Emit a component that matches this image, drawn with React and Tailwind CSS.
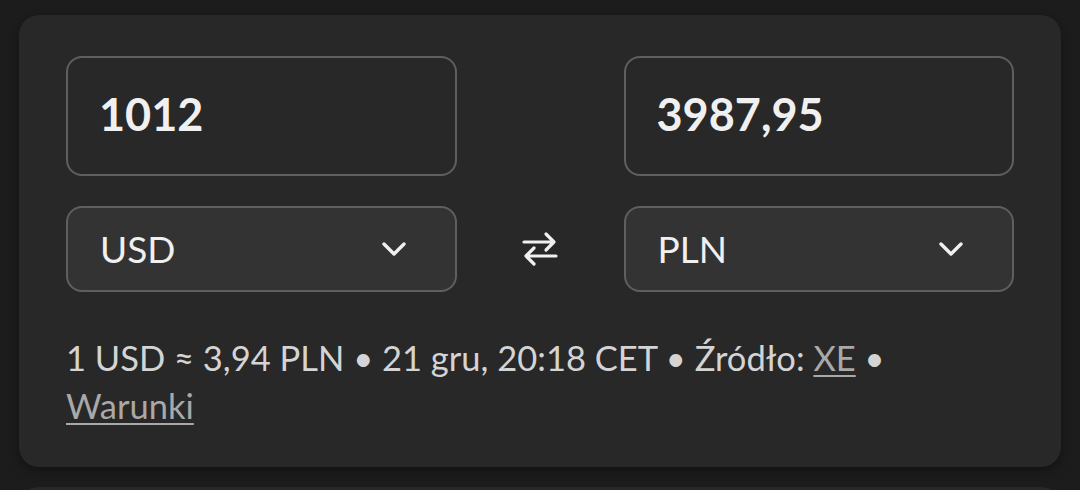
import React, { useState } from 'react';

const Chevron = () => (
  <svg width="26" height="16" viewBox="0 0 26 16" fill="none" stroke="currentColor" strokeWidth="3.4" strokeLinecap="round" strokeLinejoin="round">
    <path d="M3 3l10 10 10-10" />
  </svg>
);

const SwapIcon = () => (
  <svg width="36" height="40" viewBox="0 0 36 40" fill="none" stroke="currentColor" strokeWidth="3.2" strokeLinecap="round" strokeLinejoin="round">
    <path d="M2 13h30M24 5l8 8-8 8" />
    <path d="M34 27H4M12 19l-8 8 8 8" />
  </svg>
);

const CurrencySelect = ({ value }) => (
  <button className="h-[86px] w-full flex items-center justify-between rounded-2xl border-2 border-[#5f5f5f] bg-[#333333] pl-[32px] pr-[48px] text-[37px] text-[#f0f0f0]">
    <span>{value}</span>
    <Chevron />
  </button>
);

const AmountInput = ({ value, onChange }) => (
  <input
    value={value}
    onChange={(e) => onChange(e.target.value)}
    className="h-[120px] w-full rounded-2xl border-2 border-[#5f5f5f] bg-transparent pl-[31px] pr-[34px] pb-[4px] text-[45px] font-bold text-[#f0f0f0] outline-none"
  />
);

export default function App() {
  const [amount, setAmount] = useState('1012');
  const [result, setResult] = useState('3987,95');

  return (
    <div className="h-[490px] overflow-hidden bg-[#1c1c1c] px-[19px] pt-[15px] font-['Lato','Liberation_Sans',sans-serif]">
      <div className="rounded-[20px] bg-[#282828] px-[47px] pt-[41px] pb-[37px] shadow-[0_4px_10px_rgba(0,0,0,0.35)]">
        <div className="grid grid-cols-[1fr_167px_1fr] gap-y-[30px]">
          <AmountInput value={amount} onChange={setAmount} />
          <div />
          <AmountInput value={result} onChange={setResult} />
          <CurrencySelect value="USD" />
          <div className="flex items-center justify-center text-[#f0f0f0]">
            <SwapIcon />
          </div>
          <CurrencySelect value="PLN" />
        </div>
        <p className="mt-[42px] text-[34.5px] leading-[48px] text-[#d4d4d4]">
          1 USD ≈ 3,94 PLN • 21 gru, 20:18 CET • Źródło:{' '}
          <a href="#" className="text-[#a9a9a9] underline decoration-2 underline-offset-4">XE</a> •{' '}
          <a href="#" className="text-[#a9a9a9] underline decoration-2 underline-offset-4">Warunki</a>
        </p>
      </div>
      <div className="mt-[20px] h-[60px] rounded-[20px] bg-[#282828]" />
    </div>
  );
}
